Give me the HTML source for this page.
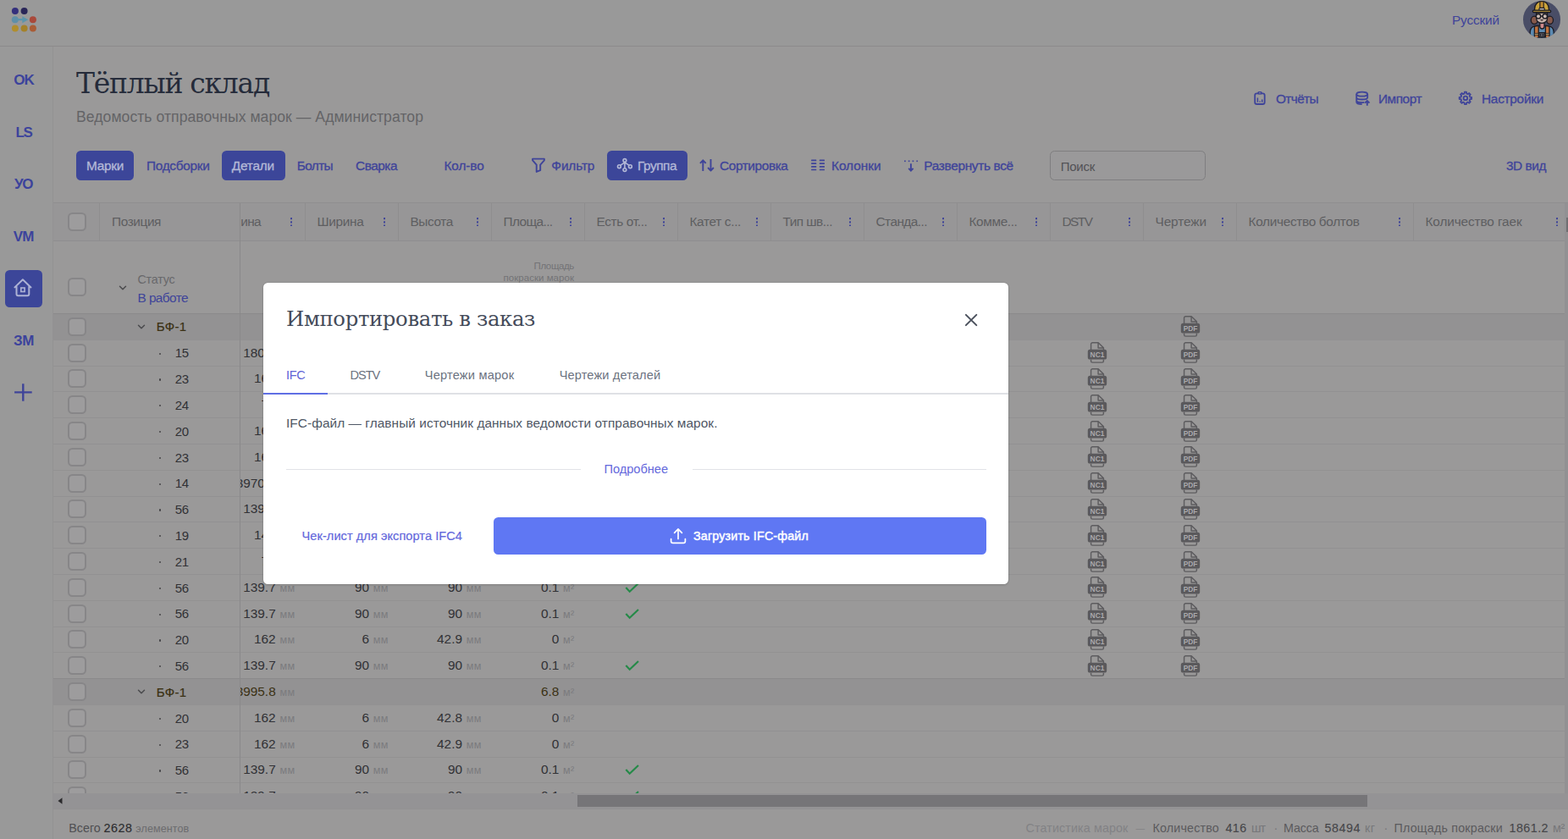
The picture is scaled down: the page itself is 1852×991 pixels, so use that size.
<!DOCTYPE html>
<html lang="ru"><head><meta charset="utf-8"><title>Тёплый склад — Ведомость отправочных марок</title>
<style>
*{box-sizing:border-box;margin:0;padding:0}
html,body{width:1852px;height:991px;overflow:hidden}
body{position:relative;background:#9a9999;font-family:'Liberation Sans',sans-serif;font-size:15.4px;color:#313135}
#app,#app div,#app span,#app svg,#app header,#app nav,#app main,#app footer,#app h1,#app h2,#app p,#app a,#app button,#app label,#app section{position:absolute;display:block}
#app{left:0;top:0;width:1852px;height:991px;overflow:hidden}
.t{white-space:pre}
a{text-decoration:none}
button{border:0;background:none;font:inherit}
h1,h2{font-weight:400}
.ln{background:#8c8a8b}
.cb{border:2px solid #878688;border-radius:5.5px;background:#9d9c9d}
</style></head>
<body><div id="app">
<header style="left:0;top:0;width:1852px;height:54px;background:#999999"><svg style="left:0px;top:0px;" width="54" height="48" viewBox="0 0 54 48"><circle cx="17.9" cy="12.9" r="4" fill="#342f7c"/><circle cx="28.6" cy="12.9" r="4" fill="#2a2658"/><circle cx="17.8" cy="23.2" r="4" fill="#5f8fa8"/><circle cx="38.9" cy="23.2" r="4" fill="#a9493b"/><circle cx="17.9" cy="33.5" r="4" fill="#b08e2e"/><circle cx="28.6" cy="33.5" r="4" fill="#a4822a"/><circle cx="38.9" cy="33.5" r="4" fill="#a95c36"/><path d="M21 22.1h5.3v-2.9l7 4-7 4v-2.900H21z" fill="#5c94ab"/></svg><a class="t" style="left:1715.00px;top:13.26px;font-size:15.4px;line-height:22px;color:#3f4499;letter-spacing:-0.158px;">Русский</a><div style="left:1799.2px;top:1.2px;width:43.6px;height:43.6px;border-radius:50%;overflow:hidden;background:#494d66"><svg style="left:-0.2px;top:-0.2px;" width="44" height="44" viewBox="0 0 44 44"><g stroke="#1b1b22" stroke-width="1.3" stroke-linejoin="round"><ellipse cx="13.2" cy="22.8" rx="3.9" ry="4.6" fill="#86594b"/><ellipse cx="31.6" cy="22.8" rx="3.9" ry="4.6" fill="#86594b"/><path d="M8.2 44.500v-7.500c0-4.600 3.400-7 7-7.600h14c3.600.6 7 3 7 7.600v7.500z" fill="#5c8bb2"/><path d="M19.8 26v4.3c0 1.600 1 2.700 2.600 2.700s2.600-1.100 2.600-2.700V26z" fill="#cf8a8c"/><path d="M13.4 30.2l4.800-.9V44h-4.800zM26.4 29.3l4.600.9V44h-4.600z" fill="#c1723d"/><path d="M13.4 38.4h4.800v1.900h-4.800zM26.4 38.4H31v1.900h-4.600z" fill="#d2b476" stroke-width="0.8"/><rect x="18.7" y="37.6" width="6.8" height="5.400" fill="#5a5d66"/><path d="M20.7 39v2.800M23.500 39v2.800" stroke-width="1" fill="none"/><path d="M15.6 14h13v6.500c0 3.600-2.900 6-6.500 6s-6.500-2.400-6.500-6z" fill="#c6b1a9"/><circle cx="18" cy="18.2" r="2.7" fill="#cbbbb4" stroke-width="1.4"/><circle cx="25.8" cy="18.2" r="2.7" fill="#cbbbb4" stroke-width="1.4"/><path d="M20.7 18.2h2.400" fill="none"/><path d="M20.6 22.4c.5 1.100 2.400 1.100 2.900 0z" fill="#7a3a34" stroke-width="0.7"/><path d="M13.6 11.600V9.400C13.600 4.200 17.200.4 22 .4s8.400 3.800 8.400 9v2.200z" fill="#caa33c"/><path d="M19.9.7h4.300v8h-4.300z" fill="#c28d2f" stroke-width="1.1"/><path d="M18.9 11.400V9.600c0-.7.5-1.200 1.200-1.200h4c.7 0 1.200.5 1.200 1.200v1.800z" fill="#c9c4c2" stroke-width="1.1"/><rect x="11.4" y="11.2" width="21.3" height="2.3" rx="1" fill="#caa33c"/></g></svg></div></header>
<div class="ln" style="left:0px;top:54px;width:1852px;height:1px;"></div><nav style="left:0;top:55px;width:62px;height:936px;background:#999999"></nav>
<div class="ln" style="left:62px;top:55px;width:1px;height:936px;background:#939293"></div><a class="t" style="left:16.30px;top:83.11px;font-size:17px;line-height:24px;color:#3c439c;font-weight:700;letter-spacing:-0.950px;">OK</a><a class="t" style="left:18.50px;top:145.11px;font-size:17px;line-height:24px;color:#3c439c;font-weight:700;letter-spacing:-1.467px;">LS</a><a class="t" style="left:17.00px;top:206.11px;font-size:17px;line-height:24px;color:#3c439c;font-weight:700;letter-spacing:-0.887px;">УО</a><a class="t" style="left:15.70px;top:268.31px;font-size:17px;line-height:24px;color:#3c439c;font-weight:700;letter-spacing:-0.700px;">VM</a><a class="t" style="left:16.00px;top:391.11px;font-size:17px;line-height:24px;color:#3c439c;font-weight:700;letter-spacing:-0.306px;">ЗМ</a><div style="left:6px;top:319px;width:44px;height:44px;background:#3c4699;border-radius:5.5px"><svg style="left:0px;top:0px;" width="44" height="44" viewBox="0 0 44 44"><path d="M11.4 20.4l9.500-9.100 9.600 9.100M13.500 19.500v8.800a1.900 1.900 0 0 0 1.900 1.900h11a1.900 1.900 0 0 0 1.900-1.900v-8.800" stroke="#adb2d5" stroke-width="2" fill="none" stroke-linecap="round" stroke-linejoin="round"/><rect x="18.8" y="21" width="4.3" height="4.500" stroke="#adb2d5" stroke-width="1.6" fill="none"/></svg></div><svg style="left:15px;top:451px" width="25" height="25" viewBox="15 451 25 25"><path d="M27.3 453.2v20.600M17.100 463.400h20.600" stroke="#3f4499" stroke-width="2.4" fill="none"/></svg>
<h1 class="t" style="left:90.00px;top:76.17px;font-size:33px;line-height:46px;color:#252b3a;font-family:'DejaVu Serif','Liberation Serif',serif;letter-spacing:-1.276px;">Тёплый склад</h1><p class="t" style="left:90.00px;top:125.60px;font-size:17.6px;line-height:25px;color:#646467;letter-spacing:0.052px;">Ведомость отправочных марок — Администратор</p><svg style="left:1478px;top:105px" width="20" height="22" viewBox="1478 105 20 22"><rect x="1482.2" y="110.3" width="11.5" height="12.700" rx="2.3" stroke="#3f4499" stroke-width="1.8" fill="none"/><rect x="1485.3" y="107.9" width="5.4" height="3.700" rx="1.5" fill="#3f4499"/><circle cx="1488" cy="109.7" r="0.8" fill="#9a9999"/><path d="M1485.4 120.700v-5.200M1488.100 120.700v-1.300M1490.700 120.700v-3.200" stroke="#3f4499" stroke-width="1.5" fill="none"/></svg><a class="t" style="left:1507.00px;top:106.16px;font-size:15.4px;line-height:22px;color:#3f4499;letter-spacing:-0.620px;-webkit-text-stroke:0.3px #3f4499;">Отчёты</a><svg style="left:1599px;top:106px" width="21" height="21" viewBox="1599 106 21 21"><ellipse cx="1608.7" cy="111.2" rx="6.5" ry="2.500" stroke="#3f4499" stroke-width="1.8" fill="none"/><path d="M1602.2 111.200v9.400c0 1.500 2.900 2.600 6.500 2.600M1615.200 111.200v4.500M1602.200 114.900c0 1.500 2.900 2.600 6.500 2.600s6.500-1.100 6.500-2.600M1602.200 118.600c0 1.500 2.900 2.600 6.500 2.600 1 0 1.800-.1 2.600-.2" stroke="#3f4499" stroke-width="1.8" fill="none"/><path d="M1614.8 124.700v-5.500M1612.100 121.700l2.700-2.700 2.700 2.700" stroke="#3f4499" stroke-width="1.9" fill="none"/></svg><a class="t" style="left:1628.00px;top:106.16px;font-size:15.4px;line-height:22px;color:#3f4499;letter-spacing:-0.469px;-webkit-text-stroke:0.3px #3f4499;">Импорт</a><svg style="left:1720px;top:105px" width="22" height="22" viewBox="1720 105 22 22"><path d="M1729.59 110.56L1729.81 108.68L1731.99 108.68L1732.21 110.56L1733.75 111.20L1735.23 110.02L1736.78 111.57L1735.60 113.05L1736.24 114.59L1738.12 114.81L1738.12 116.99L1736.24 117.21L1735.60 118.75L1736.78 120.23L1735.23 121.78L1733.75 120.60L1732.21 121.24L1731.99 123.12L1729.81 123.12L1729.59 121.24L1728.05 120.60L1726.57 121.78L1725.02 120.23L1726.20 118.75L1725.56 117.21L1723.68 116.99L1723.68 114.81L1725.56 114.59L1726.20 113.05L1725.02 111.57L1726.57 110.02L1728.05 111.20Z" stroke="#3f4499" stroke-width="1.8" fill="none" stroke-linejoin="round"/><circle cx="1730.9" cy="115.9" r="2.3" stroke="#3f4499" stroke-width="1.8" fill="none"/></svg><a class="t" style="left:1750.00px;top:106.16px;font-size:15.4px;line-height:22px;color:#3f4499;letter-spacing:-0.274px;-webkit-text-stroke:0.3px #3f4499;">Настройки</a>
<div style="left:90px;top:178px;width:67.5px;height:34.5px;background:#3c4699;border-radius:5.5px"></div><a class="t" style="left:102.00px;top:184.96px;font-size:15.4px;line-height:22px;color:#b4b9d7;letter-spacing:-0.251px;-webkit-text-stroke:0.3px #b4b9d7;">Марки</a><a class="t" style="left:173.00px;top:184.96px;font-size:15.4px;line-height:22px;color:#3f4499;letter-spacing:-0.304px;-webkit-text-stroke:0.3px #3f4499;">Подсборки</a><div style="left:262px;top:178px;width:74.5px;height:34.5px;background:#3c4699;border-radius:5.5px"></div><a class="t" style="left:273.80px;top:184.96px;font-size:15.4px;line-height:22px;color:#b4b9d7;letter-spacing:-0.217px;-webkit-text-stroke:0.3px #b4b9d7;">Детали</a><a class="t" style="left:350.80px;top:184.96px;font-size:15.4px;line-height:22px;color:#3f4499;letter-spacing:-0.644px;-webkit-text-stroke:0.3px #3f4499;">Болты</a><a class="t" style="left:420.00px;top:184.96px;font-size:15.4px;line-height:22px;color:#3f4499;letter-spacing:-0.479px;-webkit-text-stroke:0.3px #3f4499;">Сварка</a><a class="t" style="left:524.50px;top:184.96px;font-size:15.4px;line-height:22px;color:#3f4499;letter-spacing:-0.110px;-webkit-text-stroke:0.3px #3f4499;">Кол-во</a><svg style="left:626px;top:184px" width="20" height="22" viewBox="626 184 20 22"><path d="M629.05 187.65H642.85V189.300L638.200 194.700V201.200L633.700 202.900V194.700L629.050 189.300Z" stroke="#3f4499" stroke-width="1.9" fill="none" stroke-linejoin="round"/></svg><a class="t" style="left:651.30px;top:184.96px;font-size:15.4px;line-height:22px;color:#3f4499;letter-spacing:-0.117px;-webkit-text-stroke:0.3px #3f4499;">Фильтр</a><div style="left:716.8px;top:178px;width:95.4px;height:34.5px;background:#3c4699;border-radius:5.5px"></div><svg style="left:727px;top:184px" width="22" height="22" viewBox="727 184 22 22"><path d="M737.9 191.300V198.700M737.900 191.800L732.600 195.400M737.900 191.800L743.200 195.400" stroke="#b4b9d7" stroke-width="1.6" fill="none"/><circle cx="737.9" cy="189.5" r="1.9" stroke="#b4b9d7" stroke-width="1.6" fill="#3c4699"/><circle cx="731.4" cy="196.7" r="1.9" stroke="#b4b9d7" stroke-width="1.6" fill="#3c4699"/><circle cx="744.4" cy="196.7" r="1.9" stroke="#b4b9d7" stroke-width="1.6" fill="#3c4699"/><circle cx="737.9" cy="200.6" r="1.9" stroke="#b4b9d7" stroke-width="1.6" fill="#3c4699"/></svg><a class="t" style="left:753.00px;top:184.96px;font-size:15.4px;line-height:22px;color:#b4b9d7;letter-spacing:-0.464px;-webkit-text-stroke:0.3px #b4b9d7;">Группа</a><svg style="left:823px;top:184px" width="24" height="22" viewBox="823 184 24 22"><path d="M830.3 202V189.200M826.900 192.900L830.300 189.300L833.700 192.900M839.500 188.100V201.500M836.100 198L839.500 201.600L842.900 198" stroke="#3f4499" stroke-width="1.9" fill="none" stroke-linejoin="round"/></svg><a class="t" style="left:850.00px;top:184.96px;font-size:15.4px;line-height:22px;color:#3f4499;letter-spacing:-0.397px;-webkit-text-stroke:0.3px #3f4499;">Сортировка</a><svg style="left:955px;top:184px" width="22" height="22" viewBox="955 184 22 22"><rect x="958.1" y="188.45" width="6.2" height="1.7" rx="0.5" fill="#3f4499"/><rect x="958.1" y="192.20" width="6.2" height="1.7" rx="0.5" fill="#3f4499"/><rect x="958.1" y="195.95" width="6.2" height="1.7" rx="0.5" fill="#3f4499"/><rect x="958.1" y="199.65" width="6.2" height="1.7" rx="0.5" fill="#3f4499"/><rect x="967.8" y="188.45" width="6.2" height="1.7" rx="0.5" fill="#3f4499"/><rect x="967.8" y="192.20" width="6.2" height="1.7" rx="0.5" fill="#3f4499"/><rect x="967.8" y="195.95" width="6.2" height="1.7" rx="0.5" fill="#3f4499"/><rect x="967.8" y="199.65" width="6.2" height="1.7" rx="0.5" fill="#3f4499"/></svg><a class="t" style="left:982.00px;top:184.96px;font-size:15.4px;line-height:22px;color:#3f4499;letter-spacing:-0.033px;-webkit-text-stroke:0.3px #3f4499;">Колонки</a><svg style="left:1066px;top:184px" width="20" height="22" viewBox="1066 184 20 22"><rect x="1068.05" y="189.5" width="1.7" height="1.600" fill="#3f4499"/><rect x="1072.80" y="189.5" width="1.7" height="1.600" fill="#3f4499"/><rect x="1077.55" y="189.5" width="1.7" height="1.600" fill="#3f4499"/><rect x="1082.35" y="189.5" width="1.7" height="1.600" fill="#3f4499"/><path d="M1075.9 193.200V201.300M1073.200 198.800L1075.900 201.600L1078.600 198.800" stroke="#3f4499" stroke-width="1.9" fill="none"/></svg><a class="t" style="left:1091.30px;top:184.96px;font-size:15.4px;line-height:22px;color:#3f4499;letter-spacing:-0.330px;-webkit-text-stroke:0.3px #3f4499;">Развернуть всё</a><div style="left:1240px;top:178px;width:184px;height:34.5px;border:1px solid #7f7e80;border-radius:5.5px;background:#9a999a"></div><label class="t" style="left:1252.80px;top:185.60px;font-size:15px;line-height:21px;color:#525256;letter-spacing:-0.276px;">Поиск</label><a class="t" style="left:1779.00px;top:184.96px;font-size:15.4px;line-height:22px;color:#3f4499;letter-spacing:-0.453px;-webkit-text-stroke:0.3px #3f4499;">3D вид</a>
<section style="left:0;top:0;width:1852px;height:991px"><div class="ln" style="left:63px;top:239px;width:1789px;height:1px;background:#8f8e8f"></div><div style="left:63px;top:240px;width:1785px;height:44.5px;background:#979697"></div><div class="ln" style="left:63px;top:284px;width:1789px;height:1px;background:#8f8e8f"></div><div style="left:63px;top:285px;width:1785px;height:653px;overflow:hidden"><div class="cb" style="left:17px;top:43px;width:22px;height:22px;"></div><svg style="left:77px;top:51.5px;" width="10" height="6.5" viewBox="-5 -3.2 10 6.5"><path d="M-3.500 -1.900L0 1.600L3.500 -1.900" stroke="#4a4a4d" stroke-width="1.500" fill="none" stroke-linecap="round" stroke-linejoin="round"/></svg><span class="t" style="left:99.50px;top:34.95px;font-size:14.3px;line-height:20px;color:#68686b;letter-spacing:-0.201px;">Статус</span><span class="t" style="left:99.50px;top:55.66px;font-size:15.4px;line-height:22px;color:#3f4499;letter-spacing:-0.580px;">В работе</span><span class="t" style="left:567.50px;top:21.02px;font-size:11.5px;line-height:16px;color:#737376;letter-spacing:-0.366px;">Площадь</span><span class="t" style="left:531.50px;top:34.82px;font-size:11.5px;line-height:16px;color:#737376;letter-spacing:0.037px;">покраски марок</span><div style="left:0px;top:85.3px;width:1789px;height:30.8px;background:#939293"></div><div style="left:0px;top:85px;width:1789px;height:1px;background:#8b8a8b"></div><div class="cb" style="left:17px;top:89.7px;width:22px;height:22px;"></div><svg style="left:98.8px;top:97.7px;" width="10" height="6.5" viewBox="-5 -3.2 10 6.5"><path d="M-3.500 -1.900L0 1.600L3.500 -1.900" stroke="#4a4a4d" stroke-width="1.500" fill="none" stroke-linecap="round" stroke-linejoin="round"/></svg><span class="t" style="left:121.80px;top:90.30px;font-size:15px;line-height:21px;color:#3b3113;letter-spacing:0.295px;-webkit-text-stroke:0.2px #3b3113;">БФ-1</span><svg style="left:1331px;top:88.4px;" width="24" height="25.5" viewBox="0 0 24 25.500"><path d="M4.600 9V2.600a1.800 1.800 0 0 1 1.800-1.800h6.800l6.200 6V9M4.600 20.500v1.900a1.700 1.700 0 0 0 1.700 1.700h11.400a1.700 1.700 0 0 0 1.700-1.700v-1.900M13.100 1v5.900h6" stroke="#5d5c5f" stroke-width="1.450" fill="none" stroke-linejoin="round"/><rect x="0.800" y="8.800" width="22.400" height="11.800" rx="2.600" fill="#5a595c"/><text x="12" y="18.200" text-anchor="middle" font-family="'Liberation Sans',sans-serif" font-weight="700" font-size="8.400" fill="#aaa9ac">PDF</text></svg><div style="left:0px;top:115.8px;width:1789px;height:1px;background:#929192"></div><div class="cb" style="left:17px;top:120.5px;width:22px;height:22px;"></div><div style="left:124.5px;top:131.5px;width:2.4px;height:2.4px;background:#444447;border-radius:50%"></div><span class="t" style="left:143.70px;top:121.30px;font-size:15px;line-height:21px;color:#313135;letter-spacing:-0.194px;">15</span><svg style="left:1221px;top:119.2px;" width="24" height="25.5" viewBox="0 0 24 25.500"><path d="M4.600 9V2.600a1.800 1.800 0 0 1 1.800-1.800h6.800l6.200 6V9M4.600 20.500v1.900a1.700 1.700 0 0 0 1.700 1.700h11.400a1.700 1.700 0 0 0 1.700-1.700v-1.900M13.100 1v5.900h6" stroke="#5d5c5f" stroke-width="1.450" fill="none" stroke-linejoin="round"/><rect x="0.800" y="8.800" width="22.400" height="11.800" rx="2.600" fill="#5a595c"/><text x="12" y="18.200" text-anchor="middle" font-family="'Liberation Sans',sans-serif" font-weight="700" font-size="8.400" fill="#aaa9ac">NC1</text></svg><svg style="left:1331px;top:119.2px;" width="24" height="25.5" viewBox="0 0 24 25.500"><path d="M4.600 9V2.600a1.800 1.800 0 0 1 1.800-1.800h6.800l6.200 6V9M4.600 20.500v1.900a1.700 1.700 0 0 0 1.700 1.700h11.400a1.700 1.700 0 0 0 1.700-1.700v-1.900M13.100 1v5.900h6" stroke="#5d5c5f" stroke-width="1.450" fill="none" stroke-linejoin="round"/><rect x="0.800" y="8.800" width="22.400" height="11.800" rx="2.600" fill="#5a595c"/><text x="12" y="18.200" text-anchor="middle" font-family="'Liberation Sans',sans-serif" font-weight="700" font-size="8.400" fill="#aaa9ac">PDF</text></svg><div style="left:0px;top:146.6px;width:1789px;height:1px;background:#929192"></div><div class="cb" style="left:17px;top:151.3px;width:22px;height:22px;"></div><div style="left:124.5px;top:162.3px;width:2.4px;height:2.4px;background:#444447;border-radius:50%"></div><span class="t" style="left:143.70px;top:152.10px;font-size:15px;line-height:21px;color:#313135;letter-spacing:-0.194px;">23</span><svg style="left:1221px;top:150px;" width="24" height="25.5" viewBox="0 0 24 25.500"><path d="M4.600 9V2.600a1.800 1.800 0 0 1 1.800-1.800h6.800l6.200 6V9M4.600 20.500v1.900a1.700 1.700 0 0 0 1.700 1.700h11.400a1.700 1.700 0 0 0 1.700-1.700v-1.900M13.100 1v5.900h6" stroke="#5d5c5f" stroke-width="1.450" fill="none" stroke-linejoin="round"/><rect x="0.800" y="8.800" width="22.400" height="11.800" rx="2.600" fill="#5a595c"/><text x="12" y="18.200" text-anchor="middle" font-family="'Liberation Sans',sans-serif" font-weight="700" font-size="8.400" fill="#aaa9ac">NC1</text></svg><svg style="left:1331px;top:150px;" width="24" height="25.5" viewBox="0 0 24 25.500"><path d="M4.600 9V2.600a1.800 1.800 0 0 1 1.800-1.800h6.800l6.200 6V9M4.600 20.500v1.900a1.700 1.700 0 0 0 1.700 1.700h11.400a1.700 1.700 0 0 0 1.700-1.700v-1.900M13.100 1v5.900h6" stroke="#5d5c5f" stroke-width="1.450" fill="none" stroke-linejoin="round"/><rect x="0.800" y="8.800" width="22.400" height="11.800" rx="2.600" fill="#5a595c"/><text x="12" y="18.200" text-anchor="middle" font-family="'Liberation Sans',sans-serif" font-weight="700" font-size="8.400" fill="#aaa9ac">PDF</text></svg><div style="left:0px;top:177.4px;width:1789px;height:1px;background:#929192"></div><div class="cb" style="left:17px;top:182.1px;width:22px;height:22px;"></div><div style="left:124.5px;top:193.1px;width:2.4px;height:2.4px;background:#444447;border-radius:50%"></div><span class="t" style="left:143.70px;top:182.90px;font-size:15px;line-height:21px;color:#313135;letter-spacing:-0.194px;">24</span><svg style="left:1221px;top:180.8px;" width="24" height="25.5" viewBox="0 0 24 25.500"><path d="M4.600 9V2.600a1.800 1.800 0 0 1 1.800-1.800h6.800l6.200 6V9M4.600 20.500v1.900a1.700 1.700 0 0 0 1.700 1.700h11.400a1.700 1.700 0 0 0 1.700-1.700v-1.900M13.100 1v5.900h6" stroke="#5d5c5f" stroke-width="1.450" fill="none" stroke-linejoin="round"/><rect x="0.800" y="8.800" width="22.400" height="11.800" rx="2.600" fill="#5a595c"/><text x="12" y="18.200" text-anchor="middle" font-family="'Liberation Sans',sans-serif" font-weight="700" font-size="8.400" fill="#aaa9ac">NC1</text></svg><svg style="left:1331px;top:180.8px;" width="24" height="25.5" viewBox="0 0 24 25.500"><path d="M4.600 9V2.600a1.800 1.800 0 0 1 1.800-1.800h6.800l6.200 6V9M4.600 20.500v1.900a1.700 1.700 0 0 0 1.700 1.700h11.400a1.700 1.700 0 0 0 1.700-1.700v-1.900M13.100 1v5.900h6" stroke="#5d5c5f" stroke-width="1.450" fill="none" stroke-linejoin="round"/><rect x="0.800" y="8.800" width="22.400" height="11.800" rx="2.600" fill="#5a595c"/><text x="12" y="18.200" text-anchor="middle" font-family="'Liberation Sans',sans-serif" font-weight="700" font-size="8.400" fill="#aaa9ac">PDF</text></svg><div style="left:0px;top:208.2px;width:1789px;height:1px;background:#929192"></div><div class="cb" style="left:17px;top:212.9px;width:22px;height:22px;"></div><div style="left:124.5px;top:223.9px;width:2.4px;height:2.4px;background:#444447;border-radius:50%"></div><span class="t" style="left:143.70px;top:213.70px;font-size:15px;line-height:21px;color:#313135;letter-spacing:-0.194px;">20</span><svg style="left:1221px;top:211.6px;" width="24" height="25.5" viewBox="0 0 24 25.500"><path d="M4.600 9V2.600a1.800 1.800 0 0 1 1.800-1.800h6.800l6.200 6V9M4.600 20.500v1.900a1.700 1.700 0 0 0 1.700 1.700h11.400a1.700 1.700 0 0 0 1.700-1.700v-1.900M13.100 1v5.900h6" stroke="#5d5c5f" stroke-width="1.450" fill="none" stroke-linejoin="round"/><rect x="0.800" y="8.800" width="22.400" height="11.800" rx="2.600" fill="#5a595c"/><text x="12" y="18.200" text-anchor="middle" font-family="'Liberation Sans',sans-serif" font-weight="700" font-size="8.400" fill="#aaa9ac">NC1</text></svg><svg style="left:1331px;top:211.6px;" width="24" height="25.5" viewBox="0 0 24 25.500"><path d="M4.600 9V2.600a1.800 1.800 0 0 1 1.800-1.800h6.800l6.200 6V9M4.600 20.500v1.900a1.700 1.700 0 0 0 1.700 1.700h11.400a1.700 1.700 0 0 0 1.700-1.700v-1.900M13.100 1v5.900h6" stroke="#5d5c5f" stroke-width="1.450" fill="none" stroke-linejoin="round"/><rect x="0.800" y="8.800" width="22.400" height="11.800" rx="2.600" fill="#5a595c"/><text x="12" y="18.200" text-anchor="middle" font-family="'Liberation Sans',sans-serif" font-weight="700" font-size="8.400" fill="#aaa9ac">PDF</text></svg><div style="left:0px;top:239px;width:1789px;height:1px;background:#929192"></div><div class="cb" style="left:17px;top:243.7px;width:22px;height:22px;"></div><div style="left:124.5px;top:254.7px;width:2.4px;height:2.4px;background:#444447;border-radius:50%"></div><span class="t" style="left:143.70px;top:244.50px;font-size:15px;line-height:21px;color:#313135;letter-spacing:-0.194px;">23</span><svg style="left:1221px;top:242.4px;" width="24" height="25.5" viewBox="0 0 24 25.500"><path d="M4.600 9V2.600a1.800 1.800 0 0 1 1.800-1.800h6.800l6.200 6V9M4.600 20.500v1.900a1.700 1.700 0 0 0 1.700 1.700h11.400a1.700 1.700 0 0 0 1.700-1.700v-1.900M13.100 1v5.900h6" stroke="#5d5c5f" stroke-width="1.450" fill="none" stroke-linejoin="round"/><rect x="0.800" y="8.800" width="22.400" height="11.800" rx="2.600" fill="#5a595c"/><text x="12" y="18.200" text-anchor="middle" font-family="'Liberation Sans',sans-serif" font-weight="700" font-size="8.400" fill="#aaa9ac">NC1</text></svg><svg style="left:1331px;top:242.4px;" width="24" height="25.5" viewBox="0 0 24 25.500"><path d="M4.600 9V2.600a1.800 1.800 0 0 1 1.800-1.800h6.800l6.200 6V9M4.600 20.500v1.900a1.700 1.700 0 0 0 1.700 1.700h11.400a1.700 1.700 0 0 0 1.700-1.700v-1.900M13.100 1v5.900h6" stroke="#5d5c5f" stroke-width="1.450" fill="none" stroke-linejoin="round"/><rect x="0.800" y="8.800" width="22.400" height="11.800" rx="2.600" fill="#5a595c"/><text x="12" y="18.200" text-anchor="middle" font-family="'Liberation Sans',sans-serif" font-weight="700" font-size="8.400" fill="#aaa9ac">PDF</text></svg><div style="left:0px;top:269.8px;width:1789px;height:1px;background:#929192"></div><div class="cb" style="left:17px;top:274.5px;width:22px;height:22px;"></div><div style="left:124.5px;top:285.5px;width:2.4px;height:2.4px;background:#444447;border-radius:50%"></div><span class="t" style="left:143.70px;top:275.30px;font-size:15px;line-height:21px;color:#313135;letter-spacing:-0.194px;">14</span><svg style="left:1221px;top:273.2px;" width="24" height="25.5" viewBox="0 0 24 25.500"><path d="M4.600 9V2.600a1.800 1.800 0 0 1 1.800-1.800h6.800l6.200 6V9M4.600 20.500v1.900a1.700 1.700 0 0 0 1.700 1.700h11.400a1.700 1.700 0 0 0 1.700-1.700v-1.900M13.100 1v5.900h6" stroke="#5d5c5f" stroke-width="1.450" fill="none" stroke-linejoin="round"/><rect x="0.800" y="8.800" width="22.400" height="11.800" rx="2.600" fill="#5a595c"/><text x="12" y="18.200" text-anchor="middle" font-family="'Liberation Sans',sans-serif" font-weight="700" font-size="8.400" fill="#aaa9ac">NC1</text></svg><svg style="left:1331px;top:273.2px;" width="24" height="25.5" viewBox="0 0 24 25.500"><path d="M4.600 9V2.600a1.800 1.800 0 0 1 1.800-1.800h6.800l6.200 6V9M4.600 20.500v1.900a1.700 1.700 0 0 0 1.700 1.700h11.400a1.700 1.700 0 0 0 1.700-1.700v-1.900M13.100 1v5.900h6" stroke="#5d5c5f" stroke-width="1.450" fill="none" stroke-linejoin="round"/><rect x="0.800" y="8.800" width="22.400" height="11.800" rx="2.600" fill="#5a595c"/><text x="12" y="18.200" text-anchor="middle" font-family="'Liberation Sans',sans-serif" font-weight="700" font-size="8.400" fill="#aaa9ac">PDF</text></svg><div style="left:0px;top:300.6px;width:1789px;height:1px;background:#929192"></div><div class="cb" style="left:17px;top:305.3px;width:22px;height:22px;"></div><div style="left:124.5px;top:316.3px;width:2.4px;height:2.4px;background:#444447;border-radius:50%"></div><span class="t" style="left:143.70px;top:306.10px;font-size:15px;line-height:21px;color:#313135;letter-spacing:-0.194px;">56</span><svg style="left:673px;top:308.3px;" width="20" height="16" viewBox="-9 -8 20 16"><path d="M-5.700 0.100L-1.300 4.700L9 -5" stroke="#258a48" stroke-width="2.200" fill="none" stroke-linejoin="miter"/></svg><svg style="left:1221px;top:304px;" width="24" height="25.5" viewBox="0 0 24 25.500"><path d="M4.600 9V2.600a1.800 1.800 0 0 1 1.800-1.800h6.800l6.200 6V9M4.600 20.500v1.900a1.700 1.700 0 0 0 1.700 1.700h11.400a1.700 1.700 0 0 0 1.700-1.700v-1.900M13.100 1v5.900h6" stroke="#5d5c5f" stroke-width="1.450" fill="none" stroke-linejoin="round"/><rect x="0.800" y="8.800" width="22.400" height="11.800" rx="2.600" fill="#5a595c"/><text x="12" y="18.200" text-anchor="middle" font-family="'Liberation Sans',sans-serif" font-weight="700" font-size="8.400" fill="#aaa9ac">NC1</text></svg><svg style="left:1331px;top:304px;" width="24" height="25.5" viewBox="0 0 24 25.500"><path d="M4.600 9V2.600a1.800 1.800 0 0 1 1.800-1.800h6.800l6.200 6V9M4.600 20.500v1.900a1.700 1.700 0 0 0 1.700 1.700h11.400a1.700 1.700 0 0 0 1.700-1.700v-1.900M13.100 1v5.900h6" stroke="#5d5c5f" stroke-width="1.450" fill="none" stroke-linejoin="round"/><rect x="0.800" y="8.800" width="22.400" height="11.800" rx="2.600" fill="#5a595c"/><text x="12" y="18.200" text-anchor="middle" font-family="'Liberation Sans',sans-serif" font-weight="700" font-size="8.400" fill="#aaa9ac">PDF</text></svg><div style="left:0px;top:331.4px;width:1789px;height:1px;background:#929192"></div><div class="cb" style="left:17px;top:336.1px;width:22px;height:22px;"></div><div style="left:124.5px;top:347.1px;width:2.4px;height:2.4px;background:#444447;border-radius:50%"></div><span class="t" style="left:143.70px;top:336.90px;font-size:15px;line-height:21px;color:#313135;letter-spacing:-0.194px;">19</span><svg style="left:1221px;top:334.8px;" width="24" height="25.5" viewBox="0 0 24 25.500"><path d="M4.600 9V2.600a1.800 1.800 0 0 1 1.800-1.800h6.800l6.200 6V9M4.600 20.500v1.900a1.700 1.700 0 0 0 1.700 1.700h11.400a1.700 1.700 0 0 0 1.700-1.700v-1.900M13.100 1v5.900h6" stroke="#5d5c5f" stroke-width="1.450" fill="none" stroke-linejoin="round"/><rect x="0.800" y="8.800" width="22.400" height="11.800" rx="2.600" fill="#5a595c"/><text x="12" y="18.200" text-anchor="middle" font-family="'Liberation Sans',sans-serif" font-weight="700" font-size="8.400" fill="#aaa9ac">NC1</text></svg><svg style="left:1331px;top:334.8px;" width="24" height="25.5" viewBox="0 0 24 25.500"><path d="M4.600 9V2.600a1.800 1.800 0 0 1 1.800-1.800h6.800l6.200 6V9M4.600 20.500v1.900a1.700 1.700 0 0 0 1.700 1.700h11.400a1.700 1.700 0 0 0 1.700-1.700v-1.900M13.100 1v5.900h6" stroke="#5d5c5f" stroke-width="1.450" fill="none" stroke-linejoin="round"/><rect x="0.800" y="8.800" width="22.400" height="11.800" rx="2.600" fill="#5a595c"/><text x="12" y="18.200" text-anchor="middle" font-family="'Liberation Sans',sans-serif" font-weight="700" font-size="8.400" fill="#aaa9ac">PDF</text></svg><div style="left:0px;top:362.2px;width:1789px;height:1px;background:#929192"></div><div class="cb" style="left:17px;top:366.9px;width:22px;height:22px;"></div><div style="left:124.5px;top:377.9px;width:2.4px;height:2.4px;background:#444447;border-radius:50%"></div><span class="t" style="left:143.70px;top:367.70px;font-size:15px;line-height:21px;color:#313135;letter-spacing:-0.194px;">21</span><svg style="left:1221px;top:365.6px;" width="24" height="25.5" viewBox="0 0 24 25.500"><path d="M4.600 9V2.600a1.800 1.800 0 0 1 1.800-1.800h6.800l6.200 6V9M4.600 20.500v1.900a1.700 1.700 0 0 0 1.700 1.700h11.400a1.700 1.700 0 0 0 1.700-1.700v-1.900M13.100 1v5.900h6" stroke="#5d5c5f" stroke-width="1.450" fill="none" stroke-linejoin="round"/><rect x="0.800" y="8.800" width="22.400" height="11.800" rx="2.600" fill="#5a595c"/><text x="12" y="18.200" text-anchor="middle" font-family="'Liberation Sans',sans-serif" font-weight="700" font-size="8.400" fill="#aaa9ac">NC1</text></svg><svg style="left:1331px;top:365.6px;" width="24" height="25.5" viewBox="0 0 24 25.500"><path d="M4.600 9V2.600a1.800 1.800 0 0 1 1.800-1.800h6.800l6.200 6V9M4.600 20.500v1.900a1.700 1.700 0 0 0 1.700 1.700h11.400a1.700 1.700 0 0 0 1.700-1.700v-1.900M13.100 1v5.900h6" stroke="#5d5c5f" stroke-width="1.450" fill="none" stroke-linejoin="round"/><rect x="0.800" y="8.800" width="22.400" height="11.800" rx="2.600" fill="#5a595c"/><text x="12" y="18.200" text-anchor="middle" font-family="'Liberation Sans',sans-serif" font-weight="700" font-size="8.400" fill="#aaa9ac">PDF</text></svg><div style="left:0px;top:393px;width:1789px;height:1px;background:#929192"></div><div class="cb" style="left:17px;top:397.7px;width:22px;height:22px;"></div><div style="left:124.5px;top:408.7px;width:2.4px;height:2.4px;background:#444447;border-radius:50%"></div><span class="t" style="left:143.70px;top:398.50px;font-size:15px;line-height:21px;color:#313135;letter-spacing:-0.194px;">56</span><svg style="left:673px;top:400.7px;" width="20" height="16" viewBox="-9 -8 20 16"><path d="M-5.700 0.100L-1.300 4.700L9 -5" stroke="#258a48" stroke-width="2.200" fill="none" stroke-linejoin="miter"/></svg><svg style="left:1221px;top:396.4px;" width="24" height="25.5" viewBox="0 0 24 25.500"><path d="M4.600 9V2.600a1.800 1.800 0 0 1 1.800-1.800h6.800l6.200 6V9M4.600 20.500v1.900a1.700 1.700 0 0 0 1.700 1.700h11.400a1.700 1.700 0 0 0 1.700-1.700v-1.900M13.100 1v5.900h6" stroke="#5d5c5f" stroke-width="1.450" fill="none" stroke-linejoin="round"/><rect x="0.800" y="8.800" width="22.400" height="11.800" rx="2.600" fill="#5a595c"/><text x="12" y="18.200" text-anchor="middle" font-family="'Liberation Sans',sans-serif" font-weight="700" font-size="8.400" fill="#aaa9ac">NC1</text></svg><svg style="left:1331px;top:396.4px;" width="24" height="25.5" viewBox="0 0 24 25.500"><path d="M4.600 9V2.600a1.800 1.800 0 0 1 1.800-1.800h6.800l6.200 6V9M4.600 20.500v1.900a1.700 1.700 0 0 0 1.700 1.700h11.400a1.700 1.700 0 0 0 1.700-1.700v-1.900M13.100 1v5.900h6" stroke="#5d5c5f" stroke-width="1.450" fill="none" stroke-linejoin="round"/><rect x="0.800" y="8.800" width="22.400" height="11.800" rx="2.600" fill="#5a595c"/><text x="12" y="18.200" text-anchor="middle" font-family="'Liberation Sans',sans-serif" font-weight="700" font-size="8.400" fill="#aaa9ac">PDF</text></svg><div style="left:0px;top:423.8px;width:1789px;height:1px;background:#929192"></div><div class="cb" style="left:17px;top:428.5px;width:22px;height:22px;"></div><div style="left:124.5px;top:439.5px;width:2.4px;height:2.4px;background:#444447;border-radius:50%"></div><span class="t" style="left:143.70px;top:429.30px;font-size:15px;line-height:21px;color:#313135;letter-spacing:-0.194px;">56</span><svg style="left:673px;top:431.5px;" width="20" height="16" viewBox="-9 -8 20 16"><path d="M-5.700 0.100L-1.300 4.700L9 -5" stroke="#258a48" stroke-width="2.200" fill="none" stroke-linejoin="miter"/></svg><svg style="left:1221px;top:427.2px;" width="24" height="25.5" viewBox="0 0 24 25.500"><path d="M4.600 9V2.600a1.800 1.800 0 0 1 1.800-1.800h6.800l6.200 6V9M4.600 20.500v1.900a1.700 1.700 0 0 0 1.700 1.700h11.400a1.700 1.700 0 0 0 1.700-1.700v-1.900M13.100 1v5.900h6" stroke="#5d5c5f" stroke-width="1.450" fill="none" stroke-linejoin="round"/><rect x="0.800" y="8.800" width="22.400" height="11.800" rx="2.600" fill="#5a595c"/><text x="12" y="18.200" text-anchor="middle" font-family="'Liberation Sans',sans-serif" font-weight="700" font-size="8.400" fill="#aaa9ac">NC1</text></svg><svg style="left:1331px;top:427.2px;" width="24" height="25.5" viewBox="0 0 24 25.500"><path d="M4.600 9V2.600a1.800 1.800 0 0 1 1.800-1.800h6.800l6.200 6V9M4.600 20.500v1.900a1.700 1.700 0 0 0 1.700 1.700h11.400a1.700 1.700 0 0 0 1.700-1.700v-1.900M13.100 1v5.900h6" stroke="#5d5c5f" stroke-width="1.450" fill="none" stroke-linejoin="round"/><rect x="0.800" y="8.800" width="22.400" height="11.800" rx="2.600" fill="#5a595c"/><text x="12" y="18.200" text-anchor="middle" font-family="'Liberation Sans',sans-serif" font-weight="700" font-size="8.400" fill="#aaa9ac">PDF</text></svg><div style="left:0px;top:454.6px;width:1789px;height:1px;background:#929192"></div><div class="cb" style="left:17px;top:459.3px;width:22px;height:22px;"></div><div style="left:124.5px;top:470.3px;width:2.4px;height:2.4px;background:#444447;border-radius:50%"></div><span class="t" style="left:143.70px;top:460.10px;font-size:15px;line-height:21px;color:#313135;letter-spacing:-0.194px;">20</span><svg style="left:1221px;top:458px;" width="24" height="25.5" viewBox="0 0 24 25.500"><path d="M4.600 9V2.600a1.800 1.800 0 0 1 1.800-1.800h6.800l6.200 6V9M4.600 20.500v1.900a1.700 1.700 0 0 0 1.700 1.700h11.400a1.700 1.700 0 0 0 1.700-1.700v-1.900M13.100 1v5.900h6" stroke="#5d5c5f" stroke-width="1.450" fill="none" stroke-linejoin="round"/><rect x="0.800" y="8.800" width="22.400" height="11.800" rx="2.600" fill="#5a595c"/><text x="12" y="18.200" text-anchor="middle" font-family="'Liberation Sans',sans-serif" font-weight="700" font-size="8.400" fill="#aaa9ac">NC1</text></svg><svg style="left:1331px;top:458px;" width="24" height="25.5" viewBox="0 0 24 25.500"><path d="M4.600 9V2.600a1.800 1.800 0 0 1 1.800-1.800h6.800l6.200 6V9M4.600 20.500v1.900a1.700 1.700 0 0 0 1.700 1.700h11.400a1.700 1.700 0 0 0 1.700-1.700v-1.900M13.100 1v5.900h6" stroke="#5d5c5f" stroke-width="1.450" fill="none" stroke-linejoin="round"/><rect x="0.800" y="8.800" width="22.400" height="11.800" rx="2.600" fill="#5a595c"/><text x="12" y="18.200" text-anchor="middle" font-family="'Liberation Sans',sans-serif" font-weight="700" font-size="8.400" fill="#aaa9ac">PDF</text></svg><div style="left:0px;top:485.4px;width:1789px;height:1px;background:#929192"></div><div class="cb" style="left:17px;top:490.1px;width:22px;height:22px;"></div><div style="left:124.5px;top:501.1px;width:2.4px;height:2.4px;background:#444447;border-radius:50%"></div><span class="t" style="left:143.70px;top:490.90px;font-size:15px;line-height:21px;color:#313135;letter-spacing:-0.194px;">56</span><svg style="left:673px;top:493.1px;" width="20" height="16" viewBox="-9 -8 20 16"><path d="M-5.700 0.100L-1.300 4.700L9 -5" stroke="#258a48" stroke-width="2.200" fill="none" stroke-linejoin="miter"/></svg><svg style="left:1221px;top:488.8px;" width="24" height="25.5" viewBox="0 0 24 25.500"><path d="M4.600 9V2.600a1.800 1.800 0 0 1 1.800-1.800h6.800l6.200 6V9M4.600 20.500v1.900a1.700 1.700 0 0 0 1.700 1.700h11.400a1.700 1.700 0 0 0 1.700-1.700v-1.900M13.100 1v5.900h6" stroke="#5d5c5f" stroke-width="1.450" fill="none" stroke-linejoin="round"/><rect x="0.800" y="8.800" width="22.400" height="11.800" rx="2.600" fill="#5a595c"/><text x="12" y="18.200" text-anchor="middle" font-family="'Liberation Sans',sans-serif" font-weight="700" font-size="8.400" fill="#aaa9ac">NC1</text></svg><svg style="left:1331px;top:488.8px;" width="24" height="25.5" viewBox="0 0 24 25.500"><path d="M4.600 9V2.600a1.800 1.800 0 0 1 1.800-1.800h6.800l6.200 6V9M4.600 20.500v1.900a1.700 1.700 0 0 0 1.700 1.700h11.400a1.700 1.700 0 0 0 1.700-1.700v-1.900M13.100 1v5.900h6" stroke="#5d5c5f" stroke-width="1.450" fill="none" stroke-linejoin="round"/><rect x="0.800" y="8.800" width="22.400" height="11.800" rx="2.600" fill="#5a595c"/><text x="12" y="18.200" text-anchor="middle" font-family="'Liberation Sans',sans-serif" font-weight="700" font-size="8.400" fill="#aaa9ac">PDF</text></svg><div style="left:0px;top:516.5px;width:1789px;height:30.8px;background:#939293"></div><div style="left:0px;top:516.2px;width:1789px;height:1px;background:#8b8a8b"></div><div class="cb" style="left:17px;top:520.9px;width:22px;height:22px;"></div><svg style="left:98.8px;top:528.9px;" width="10" height="6.5" viewBox="-5 -3.2 10 6.5"><path d="M-3.500 -1.900L0 1.600L3.500 -1.900" stroke="#4a4a4d" stroke-width="1.500" fill="none" stroke-linecap="round" stroke-linejoin="round"/></svg><span class="t" style="left:121.80px;top:521.50px;font-size:15px;line-height:21px;color:#3b3113;letter-spacing:0.295px;-webkit-text-stroke:0.2px #3b3113;">БФ-1</span><div style="left:0px;top:547px;width:1789px;height:1px;background:#929192"></div><div class="cb" style="left:17px;top:551.7px;width:22px;height:22px;"></div><div style="left:124.5px;top:562.7px;width:2.4px;height:2.4px;background:#444447;border-radius:50%"></div><span class="t" style="left:143.70px;top:552.50px;font-size:15px;line-height:21px;color:#313135;letter-spacing:-0.194px;">20</span><div style="left:0px;top:577.8px;width:1789px;height:1px;background:#929192"></div><div class="cb" style="left:17px;top:582.5px;width:22px;height:22px;"></div><div style="left:124.5px;top:593.5px;width:2.4px;height:2.4px;background:#444447;border-radius:50%"></div><span class="t" style="left:143.70px;top:583.30px;font-size:15px;line-height:21px;color:#313135;letter-spacing:-0.194px;">23</span><div style="left:0px;top:608.6px;width:1789px;height:1px;background:#929192"></div><div class="cb" style="left:17px;top:613.3px;width:22px;height:22px;"></div><div style="left:124.5px;top:624.3px;width:2.4px;height:2.4px;background:#444447;border-radius:50%"></div><span class="t" style="left:143.70px;top:614.10px;font-size:15px;line-height:21px;color:#313135;letter-spacing:-0.194px;">56</span><svg style="left:673px;top:616.3px;" width="20" height="16" viewBox="-9 -8 20 16"><path d="M-5.700 0.100L-1.300 4.700L9 -5" stroke="#258a48" stroke-width="2.200" fill="none" stroke-linejoin="miter"/></svg><div style="left:0px;top:639.4px;width:1789px;height:1px;background:#929192"></div><div class="cb" style="left:17px;top:644.1px;width:22px;height:22px;"></div><div style="left:124.5px;top:655.1px;width:2.4px;height:2.4px;background:#444447;border-radius:50%"></div><span class="t" style="left:143.70px;top:644.90px;font-size:15px;line-height:21px;color:#313135;letter-spacing:-0.194px;">56</span><svg style="left:673px;top:647.1px;" width="20" height="16" viewBox="-9 -8 20 16"><path d="M-5.700 0.100L-1.300 4.700L9 -5" stroke="#258a48" stroke-width="2.200" fill="none" stroke-linejoin="miter"/></svg><div style="left:221px;top:0;width:1563px;height:653px;overflow:hidden"><span class="t" style="left:354.89px;top:89.86px;font-size:15.4px;line-height:22px;color:#3b3113;">6.8</span><span class="t" style="left:381.00px;top:92.83px;font-size:12.6px;line-height:18px;color:#7b7b7e;letter-spacing:0.320px;">м²</span><span class="t" style="left:3.18px;top:120.66px;font-size:15.4px;line-height:22px;color:#313135;">180.5</span><span class="t" style="left:46.40px;top:123.63px;font-size:12.6px;line-height:18px;color:#7b7b7e;letter-spacing:0.336px;">мм</span><span class="t" style="left:134.88px;top:120.66px;font-size:15.4px;line-height:22px;color:#313135;">10</span><span class="t" style="left:156.70px;top:123.63px;font-size:12.6px;line-height:18px;color:#7b7b7e;letter-spacing:0.336px;">мм</span><span class="t" style="left:236.31px;top:120.66px;font-size:15.4px;line-height:22px;color:#313135;">180</span><span class="t" style="left:266.70px;top:123.63px;font-size:12.6px;line-height:18px;color:#7b7b7e;letter-spacing:0.336px;">мм</span><span class="t" style="left:367.74px;top:120.66px;font-size:15.4px;line-height:22px;color:#313135;">0</span><span class="t" style="left:381.00px;top:123.63px;font-size:12.6px;line-height:18px;color:#7b7b7e;letter-spacing:0.320px;">м²</span><span class="t" style="left:16.01px;top:151.46px;font-size:15.4px;line-height:22px;color:#313135;">162</span><span class="t" style="left:46.40px;top:154.43px;font-size:12.6px;line-height:18px;color:#7b7b7e;letter-spacing:0.336px;">мм</span><span class="t" style="left:143.44px;top:151.46px;font-size:15.4px;line-height:22px;color:#313135;">6</span><span class="t" style="left:156.70px;top:154.43px;font-size:12.6px;line-height:18px;color:#7b7b7e;letter-spacing:0.336px;">мм</span><span class="t" style="left:232.03px;top:151.46px;font-size:15.4px;line-height:22px;color:#313135;">42.9</span><span class="t" style="left:266.70px;top:154.43px;font-size:12.6px;line-height:18px;color:#7b7b7e;letter-spacing:0.336px;">мм</span><span class="t" style="left:367.74px;top:151.46px;font-size:15.4px;line-height:22px;color:#313135;">0</span><span class="t" style="left:381.00px;top:154.43px;font-size:12.6px;line-height:18px;color:#7b7b7e;letter-spacing:0.320px;">м²</span><span class="t" style="left:24.57px;top:182.26px;font-size:15.4px;line-height:22px;color:#313135;">70</span><span class="t" style="left:46.40px;top:185.23px;font-size:12.6px;line-height:18px;color:#7b7b7e;letter-spacing:0.336px;">мм</span><span class="t" style="left:143.44px;top:182.26px;font-size:15.4px;line-height:22px;color:#313135;">6</span><span class="t" style="left:156.70px;top:185.23px;font-size:12.6px;line-height:18px;color:#7b7b7e;letter-spacing:0.336px;">мм</span><span class="t" style="left:244.88px;top:182.26px;font-size:15.4px;line-height:22px;color:#313135;">70</span><span class="t" style="left:266.70px;top:185.23px;font-size:12.6px;line-height:18px;color:#7b7b7e;letter-spacing:0.336px;">мм</span><span class="t" style="left:367.74px;top:182.26px;font-size:15.4px;line-height:22px;color:#313135;">0</span><span class="t" style="left:381.00px;top:185.23px;font-size:12.6px;line-height:18px;color:#7b7b7e;letter-spacing:0.320px;">м²</span><span class="t" style="left:16.01px;top:213.06px;font-size:15.4px;line-height:22px;color:#313135;">162</span><span class="t" style="left:46.40px;top:216.03px;font-size:12.6px;line-height:18px;color:#7b7b7e;letter-spacing:0.336px;">мм</span><span class="t" style="left:143.44px;top:213.06px;font-size:15.4px;line-height:22px;color:#313135;">6</span><span class="t" style="left:156.70px;top:216.03px;font-size:12.6px;line-height:18px;color:#7b7b7e;letter-spacing:0.336px;">мм</span><span class="t" style="left:232.03px;top:213.06px;font-size:15.4px;line-height:22px;color:#313135;">42.8</span><span class="t" style="left:266.70px;top:216.03px;font-size:12.6px;line-height:18px;color:#7b7b7e;letter-spacing:0.336px;">мм</span><span class="t" style="left:367.74px;top:213.06px;font-size:15.4px;line-height:22px;color:#313135;">0</span><span class="t" style="left:381.00px;top:216.03px;font-size:12.6px;line-height:18px;color:#7b7b7e;letter-spacing:0.320px;">м²</span><span class="t" style="left:16.01px;top:243.86px;font-size:15.4px;line-height:22px;color:#313135;">162</span><span class="t" style="left:46.40px;top:246.83px;font-size:12.6px;line-height:18px;color:#7b7b7e;letter-spacing:0.336px;">мм</span><span class="t" style="left:143.44px;top:243.86px;font-size:15.4px;line-height:22px;color:#313135;">6</span><span class="t" style="left:156.70px;top:246.83px;font-size:12.6px;line-height:18px;color:#7b7b7e;letter-spacing:0.336px;">мм</span><span class="t" style="left:232.03px;top:243.86px;font-size:15.4px;line-height:22px;color:#313135;">42.9</span><span class="t" style="left:266.70px;top:246.83px;font-size:12.6px;line-height:18px;color:#7b7b7e;letter-spacing:0.336px;">мм</span><span class="t" style="left:367.74px;top:243.86px;font-size:15.4px;line-height:22px;color:#313135;">0</span><span class="t" style="left:381.00px;top:246.83px;font-size:12.6px;line-height:18px;color:#7b7b7e;letter-spacing:0.320px;">м²</span><span class="t" style="left:-5.38px;top:274.66px;font-size:15.4px;line-height:22px;color:#313135;">3970.5</span><span class="t" style="left:46.40px;top:277.63px;font-size:12.6px;line-height:18px;color:#7b7b7e;letter-spacing:0.336px;">мм</span><span class="t" style="left:143.44px;top:274.66px;font-size:15.4px;line-height:22px;color:#313135;">8</span><span class="t" style="left:156.70px;top:277.63px;font-size:12.6px;line-height:18px;color:#7b7b7e;letter-spacing:0.336px;">мм</span><span class="t" style="left:236.31px;top:274.66px;font-size:15.4px;line-height:22px;color:#313135;">200</span><span class="t" style="left:266.70px;top:277.63px;font-size:12.6px;line-height:18px;color:#7b7b7e;letter-spacing:0.336px;">мм</span><span class="t" style="left:354.89px;top:274.66px;font-size:15.4px;line-height:22px;color:#313135;">1.6</span><span class="t" style="left:381.00px;top:277.63px;font-size:12.6px;line-height:18px;color:#7b7b7e;letter-spacing:0.320px;">м²</span><span class="t" style="left:3.18px;top:305.46px;font-size:15.4px;line-height:22px;color:#313135;">139.7</span><span class="t" style="left:46.40px;top:308.43px;font-size:12.6px;line-height:18px;color:#7b7b7e;letter-spacing:0.336px;">мм</span><span class="t" style="left:134.88px;top:305.46px;font-size:15.4px;line-height:22px;color:#313135;">90</span><span class="t" style="left:156.70px;top:308.43px;font-size:12.6px;line-height:18px;color:#7b7b7e;letter-spacing:0.336px;">мм</span><span class="t" style="left:244.88px;top:305.46px;font-size:15.4px;line-height:22px;color:#313135;">90</span><span class="t" style="left:266.70px;top:308.43px;font-size:12.6px;line-height:18px;color:#7b7b7e;letter-spacing:0.336px;">мм</span><span class="t" style="left:354.89px;top:305.46px;font-size:15.4px;line-height:22px;color:#313135;">0.1</span><span class="t" style="left:381.00px;top:308.43px;font-size:12.6px;line-height:18px;color:#7b7b7e;letter-spacing:0.320px;">м²</span><span class="t" style="left:16.01px;top:336.26px;font-size:15.4px;line-height:22px;color:#313135;">140</span><span class="t" style="left:46.40px;top:339.23px;font-size:12.6px;line-height:18px;color:#7b7b7e;letter-spacing:0.336px;">мм</span><span class="t" style="left:143.44px;top:336.26px;font-size:15.4px;line-height:22px;color:#313135;">6</span><span class="t" style="left:156.70px;top:339.23px;font-size:12.6px;line-height:18px;color:#7b7b7e;letter-spacing:0.336px;">мм</span><span class="t" style="left:236.31px;top:336.26px;font-size:15.4px;line-height:22px;color:#313135;">140</span><span class="t" style="left:266.70px;top:339.23px;font-size:12.6px;line-height:18px;color:#7b7b7e;letter-spacing:0.336px;">мм</span><span class="t" style="left:367.74px;top:336.26px;font-size:15.4px;line-height:22px;color:#313135;">0</span><span class="t" style="left:381.00px;top:339.23px;font-size:12.6px;line-height:18px;color:#7b7b7e;letter-spacing:0.320px;">м²</span><span class="t" style="left:24.57px;top:367.06px;font-size:15.4px;line-height:22px;color:#313135;">70</span><span class="t" style="left:46.40px;top:370.03px;font-size:12.6px;line-height:18px;color:#7b7b7e;letter-spacing:0.336px;">мм</span><span class="t" style="left:143.44px;top:367.06px;font-size:15.4px;line-height:22px;color:#313135;">6</span><span class="t" style="left:156.70px;top:370.03px;font-size:12.6px;line-height:18px;color:#7b7b7e;letter-spacing:0.336px;">мм</span><span class="t" style="left:244.88px;top:367.06px;font-size:15.4px;line-height:22px;color:#313135;">70</span><span class="t" style="left:266.70px;top:370.03px;font-size:12.6px;line-height:18px;color:#7b7b7e;letter-spacing:0.336px;">мм</span><span class="t" style="left:367.74px;top:367.06px;font-size:15.4px;line-height:22px;color:#313135;">0</span><span class="t" style="left:381.00px;top:370.03px;font-size:12.6px;line-height:18px;color:#7b7b7e;letter-spacing:0.320px;">м²</span><span class="t" style="left:3.18px;top:397.86px;font-size:15.4px;line-height:22px;color:#313135;">139.7</span><span class="t" style="left:46.40px;top:400.83px;font-size:12.6px;line-height:18px;color:#7b7b7e;letter-spacing:0.336px;">мм</span><span class="t" style="left:134.88px;top:397.86px;font-size:15.4px;line-height:22px;color:#313135;">90</span><span class="t" style="left:156.70px;top:400.83px;font-size:12.6px;line-height:18px;color:#7b7b7e;letter-spacing:0.336px;">мм</span><span class="t" style="left:244.88px;top:397.86px;font-size:15.4px;line-height:22px;color:#313135;">90</span><span class="t" style="left:266.70px;top:400.83px;font-size:12.6px;line-height:18px;color:#7b7b7e;letter-spacing:0.336px;">мм</span><span class="t" style="left:354.89px;top:397.86px;font-size:15.4px;line-height:22px;color:#313135;">0.1</span><span class="t" style="left:381.00px;top:400.83px;font-size:12.6px;line-height:18px;color:#7b7b7e;letter-spacing:0.320px;">м²</span><span class="t" style="left:3.18px;top:428.66px;font-size:15.4px;line-height:22px;color:#313135;">139.7</span><span class="t" style="left:46.40px;top:431.63px;font-size:12.6px;line-height:18px;color:#7b7b7e;letter-spacing:0.336px;">мм</span><span class="t" style="left:134.88px;top:428.66px;font-size:15.4px;line-height:22px;color:#313135;">90</span><span class="t" style="left:156.70px;top:431.63px;font-size:12.6px;line-height:18px;color:#7b7b7e;letter-spacing:0.336px;">мм</span><span class="t" style="left:244.88px;top:428.66px;font-size:15.4px;line-height:22px;color:#313135;">90</span><span class="t" style="left:266.70px;top:431.63px;font-size:12.6px;line-height:18px;color:#7b7b7e;letter-spacing:0.336px;">мм</span><span class="t" style="left:354.89px;top:428.66px;font-size:15.4px;line-height:22px;color:#313135;">0.1</span><span class="t" style="left:381.00px;top:431.63px;font-size:12.6px;line-height:18px;color:#7b7b7e;letter-spacing:0.320px;">м²</span><span class="t" style="left:16.01px;top:459.46px;font-size:15.4px;line-height:22px;color:#313135;">162</span><span class="t" style="left:46.40px;top:462.43px;font-size:12.6px;line-height:18px;color:#7b7b7e;letter-spacing:0.336px;">мм</span><span class="t" style="left:143.44px;top:459.46px;font-size:15.4px;line-height:22px;color:#313135;">6</span><span class="t" style="left:156.70px;top:462.43px;font-size:12.6px;line-height:18px;color:#7b7b7e;letter-spacing:0.336px;">мм</span><span class="t" style="left:232.03px;top:459.46px;font-size:15.4px;line-height:22px;color:#313135;">42.9</span><span class="t" style="left:266.70px;top:462.43px;font-size:12.6px;line-height:18px;color:#7b7b7e;letter-spacing:0.336px;">мм</span><span class="t" style="left:367.74px;top:459.46px;font-size:15.4px;line-height:22px;color:#313135;">0</span><span class="t" style="left:381.00px;top:462.43px;font-size:12.6px;line-height:18px;color:#7b7b7e;letter-spacing:0.320px;">м²</span><span class="t" style="left:3.18px;top:490.26px;font-size:15.4px;line-height:22px;color:#313135;">139.7</span><span class="t" style="left:46.40px;top:493.23px;font-size:12.6px;line-height:18px;color:#7b7b7e;letter-spacing:0.336px;">мм</span><span class="t" style="left:134.88px;top:490.26px;font-size:15.4px;line-height:22px;color:#313135;">90</span><span class="t" style="left:156.70px;top:493.23px;font-size:12.6px;line-height:18px;color:#7b7b7e;letter-spacing:0.336px;">мм</span><span class="t" style="left:244.88px;top:490.26px;font-size:15.4px;line-height:22px;color:#313135;">90</span><span class="t" style="left:266.70px;top:493.23px;font-size:12.6px;line-height:18px;color:#7b7b7e;letter-spacing:0.336px;">мм</span><span class="t" style="left:354.89px;top:490.26px;font-size:15.4px;line-height:22px;color:#313135;">0.1</span><span class="t" style="left:381.00px;top:493.23px;font-size:12.6px;line-height:18px;color:#7b7b7e;letter-spacing:0.320px;">м²</span><span class="t" style="left:-5.38px;top:521.06px;font-size:15.4px;line-height:22px;color:#3b3113;">3995.8</span><span class="t" style="left:46.40px;top:524.03px;font-size:12.6px;line-height:18px;color:#7b7b7e;letter-spacing:0.336px;">мм</span><span class="t" style="left:354.89px;top:521.06px;font-size:15.4px;line-height:22px;color:#3b3113;">6.8</span><span class="t" style="left:381.00px;top:524.03px;font-size:12.6px;line-height:18px;color:#7b7b7e;letter-spacing:0.320px;">м²</span><span class="t" style="left:16.01px;top:551.86px;font-size:15.4px;line-height:22px;color:#313135;">162</span><span class="t" style="left:46.40px;top:554.83px;font-size:12.6px;line-height:18px;color:#7b7b7e;letter-spacing:0.336px;">мм</span><span class="t" style="left:143.44px;top:551.86px;font-size:15.4px;line-height:22px;color:#313135;">6</span><span class="t" style="left:156.70px;top:554.83px;font-size:12.6px;line-height:18px;color:#7b7b7e;letter-spacing:0.336px;">мм</span><span class="t" style="left:232.03px;top:551.86px;font-size:15.4px;line-height:22px;color:#313135;">42.8</span><span class="t" style="left:266.70px;top:554.83px;font-size:12.6px;line-height:18px;color:#7b7b7e;letter-spacing:0.336px;">мм</span><span class="t" style="left:367.74px;top:551.86px;font-size:15.4px;line-height:22px;color:#313135;">0</span><span class="t" style="left:381.00px;top:554.83px;font-size:12.6px;line-height:18px;color:#7b7b7e;letter-spacing:0.320px;">м²</span><span class="t" style="left:16.01px;top:582.66px;font-size:15.4px;line-height:22px;color:#313135;">162</span><span class="t" style="left:46.40px;top:585.63px;font-size:12.6px;line-height:18px;color:#7b7b7e;letter-spacing:0.336px;">мм</span><span class="t" style="left:143.44px;top:582.66px;font-size:15.4px;line-height:22px;color:#313135;">6</span><span class="t" style="left:156.70px;top:585.63px;font-size:12.6px;line-height:18px;color:#7b7b7e;letter-spacing:0.336px;">мм</span><span class="t" style="left:232.03px;top:582.66px;font-size:15.4px;line-height:22px;color:#313135;">42.9</span><span class="t" style="left:266.70px;top:585.63px;font-size:12.6px;line-height:18px;color:#7b7b7e;letter-spacing:0.336px;">мм</span><span class="t" style="left:367.74px;top:582.66px;font-size:15.4px;line-height:22px;color:#313135;">0</span><span class="t" style="left:381.00px;top:585.63px;font-size:12.6px;line-height:18px;color:#7b7b7e;letter-spacing:0.320px;">м²</span><span class="t" style="left:3.18px;top:613.46px;font-size:15.4px;line-height:22px;color:#313135;">139.7</span><span class="t" style="left:46.40px;top:616.43px;font-size:12.6px;line-height:18px;color:#7b7b7e;letter-spacing:0.336px;">мм</span><span class="t" style="left:134.88px;top:613.46px;font-size:15.4px;line-height:22px;color:#313135;">90</span><span class="t" style="left:156.70px;top:616.43px;font-size:12.6px;line-height:18px;color:#7b7b7e;letter-spacing:0.336px;">мм</span><span class="t" style="left:244.88px;top:613.46px;font-size:15.4px;line-height:22px;color:#313135;">90</span><span class="t" style="left:266.70px;top:616.43px;font-size:12.6px;line-height:18px;color:#7b7b7e;letter-spacing:0.336px;">мм</span><span class="t" style="left:354.89px;top:613.46px;font-size:15.4px;line-height:22px;color:#313135;">0.1</span><span class="t" style="left:381.00px;top:616.43px;font-size:12.6px;line-height:18px;color:#7b7b7e;letter-spacing:0.320px;">м²</span><span class="t" style="left:3.18px;top:644.26px;font-size:15.4px;line-height:22px;color:#313135;">139.7</span><span class="t" style="left:46.40px;top:647.23px;font-size:12.6px;line-height:18px;color:#7b7b7e;letter-spacing:0.336px;">мм</span><span class="t" style="left:134.88px;top:644.26px;font-size:15.4px;line-height:22px;color:#313135;">90</span><span class="t" style="left:156.70px;top:647.23px;font-size:12.6px;line-height:18px;color:#7b7b7e;letter-spacing:0.336px;">мм</span><span class="t" style="left:244.88px;top:644.26px;font-size:15.4px;line-height:22px;color:#313135;">90</span><span class="t" style="left:266.70px;top:647.23px;font-size:12.6px;line-height:18px;color:#7b7b7e;letter-spacing:0.336px;">мм</span><span class="t" style="left:354.89px;top:644.26px;font-size:15.4px;line-height:22px;color:#313135;">0.1</span><span class="t" style="left:381.00px;top:647.23px;font-size:12.6px;line-height:18px;color:#7b7b7e;letter-spacing:0.320px;">м²</span></div></div><div style="left:283px;top:240px;width:1px;height:698px;background:#8a898a"></div><div style="left:117px;top:240px;width:1px;height:44.5px;background:#8f8e8f"></div><div class="cb" style="left:80px;top:251px;width:22px;height:22px;"></div><span class="t" style="left:132.00px;top:250.66px;font-size:15.4px;line-height:22px;color:#5e5e61;letter-spacing:-0.408px;">Позиция</span><span class="t" style="left:284.30px;top:250.66px;font-size:15.4px;line-height:22px;color:#5e5e61;letter-spacing:-0.652px;">ина</span><svg style="left:342.6px;top:256.6px;" width="2.2" height="10.8" viewBox="0 0 2.2 10.8"><rect x="0" y="0" width="2.2" height="2.2" rx="0.4" fill="#3f4499"/><rect x="0" y="4.3" width="2.2" height="2.2" rx="0.4" fill="#3f4499"/><rect x="0" y="8.6" width="2.2" height="2.2" rx="0.4" fill="#3f4499"/></svg><div style="left:360px;top:240px;width:1px;height:44.5px;background:#8f8e8f"></div><span class="t" style="left:374.50px;top:250.66px;font-size:15.4px;line-height:22px;color:#5e5e61;letter-spacing:-0.320px;">Ширина</span><svg style="left:453.1px;top:256.6px;" width="2.2" height="10.8" viewBox="0 0 2.2 10.8"><rect x="0" y="0" width="2.2" height="2.2" rx="0.4" fill="#3f4499"/><rect x="0" y="4.3" width="2.2" height="2.2" rx="0.4" fill="#3f4499"/><rect x="0" y="8.6" width="2.2" height="2.2" rx="0.4" fill="#3f4499"/></svg><div style="left:470px;top:240px;width:1px;height:44.5px;background:#8f8e8f"></div><span class="t" style="left:484.50px;top:250.66px;font-size:15.4px;line-height:22px;color:#5e5e61;letter-spacing:-0.393px;">Высота</span><svg style="left:563.1px;top:256.6px;" width="2.2" height="10.8" viewBox="0 0 2.2 10.8"><rect x="0" y="0" width="2.2" height="2.2" rx="0.4" fill="#3f4499"/><rect x="0" y="4.3" width="2.2" height="2.2" rx="0.4" fill="#3f4499"/><rect x="0" y="8.6" width="2.2" height="2.2" rx="0.4" fill="#3f4499"/></svg><div style="left:580px;top:240px;width:1px;height:44.5px;background:#8f8e8f"></div><span class="t" style="left:594.50px;top:250.66px;font-size:15.4px;line-height:22px;color:#5e5e61;letter-spacing:-0.604px;">Площа...</span><svg style="left:673.1px;top:256.6px;" width="2.2" height="10.8" viewBox="0 0 2.2 10.8"><rect x="0" y="0" width="2.2" height="2.2" rx="0.4" fill="#3f4499"/><rect x="0" y="4.3" width="2.2" height="2.2" rx="0.4" fill="#3f4499"/><rect x="0" y="8.6" width="2.2" height="2.2" rx="0.4" fill="#3f4499"/></svg><div style="left:690px;top:240px;width:1px;height:44.5px;background:#8f8e8f"></div><span class="t" style="left:704.50px;top:250.66px;font-size:15.4px;line-height:22px;color:#5e5e61;letter-spacing:-0.353px;">Есть от...</span><svg style="left:783.1px;top:256.6px;" width="2.2" height="10.8" viewBox="0 0 2.2 10.8"><rect x="0" y="0" width="2.2" height="2.2" rx="0.4" fill="#3f4499"/><rect x="0" y="4.3" width="2.2" height="2.2" rx="0.4" fill="#3f4499"/><rect x="0" y="8.6" width="2.2" height="2.2" rx="0.4" fill="#3f4499"/></svg><div style="left:800px;top:240px;width:1px;height:44.5px;background:#8f8e8f"></div><span class="t" style="left:814.50px;top:250.66px;font-size:15.4px;line-height:22px;color:#5e5e61;letter-spacing:-0.347px;">Катет с...</span><svg style="left:893.1px;top:256.6px;" width="2.2" height="10.8" viewBox="0 0 2.2 10.8"><rect x="0" y="0" width="2.2" height="2.2" rx="0.4" fill="#3f4499"/><rect x="0" y="4.3" width="2.2" height="2.2" rx="0.4" fill="#3f4499"/><rect x="0" y="8.6" width="2.2" height="2.2" rx="0.4" fill="#3f4499"/></svg><div style="left:910px;top:240px;width:1px;height:44.5px;background:#8f8e8f"></div><span class="t" style="left:924.50px;top:250.66px;font-size:15.4px;line-height:22px;color:#5e5e61;letter-spacing:-0.533px;">Тип шв...</span><svg style="left:1003.1px;top:256.6px;" width="2.2" height="10.8" viewBox="0 0 2.2 10.8"><rect x="0" y="0" width="2.2" height="2.2" rx="0.4" fill="#3f4499"/><rect x="0" y="4.3" width="2.2" height="2.2" rx="0.4" fill="#3f4499"/><rect x="0" y="8.6" width="2.2" height="2.2" rx="0.4" fill="#3f4499"/></svg><div style="left:1020px;top:240px;width:1px;height:44.5px;background:#8f8e8f"></div><span class="t" style="left:1034.50px;top:250.66px;font-size:15.4px;line-height:22px;color:#5e5e61;letter-spacing:-0.547px;">Станда...</span><svg style="left:1113.1px;top:256.6px;" width="2.2" height="10.8" viewBox="0 0 2.2 10.8"><rect x="0" y="0" width="2.2" height="2.2" rx="0.4" fill="#3f4499"/><rect x="0" y="4.3" width="2.2" height="2.2" rx="0.4" fill="#3f4499"/><rect x="0" y="8.6" width="2.2" height="2.2" rx="0.4" fill="#3f4499"/></svg><div style="left:1130px;top:240px;width:1px;height:44.5px;background:#8f8e8f"></div><span class="t" style="left:1144.50px;top:250.66px;font-size:15.4px;line-height:22px;color:#5e5e61;letter-spacing:-0.385px;">Комме...</span><svg style="left:1223.1px;top:256.6px;" width="2.2" height="10.8" viewBox="0 0 2.2 10.8"><rect x="0" y="0" width="2.2" height="2.2" rx="0.4" fill="#3f4499"/><rect x="0" y="4.3" width="2.2" height="2.2" rx="0.4" fill="#3f4499"/><rect x="0" y="8.6" width="2.2" height="2.2" rx="0.4" fill="#3f4499"/></svg><div style="left:1240px;top:240px;width:1px;height:44.5px;background:#8f8e8f"></div><span class="t" style="left:1254.50px;top:250.66px;font-size:15.4px;line-height:22px;color:#5e5e61;letter-spacing:-1.512px;">DSTV</span><svg style="left:1333.1px;top:256.6px;" width="2.2" height="10.8" viewBox="0 0 2.2 10.8"><rect x="0" y="0" width="2.2" height="2.2" rx="0.4" fill="#3f4499"/><rect x="0" y="4.3" width="2.2" height="2.2" rx="0.4" fill="#3f4499"/><rect x="0" y="8.6" width="2.2" height="2.2" rx="0.4" fill="#3f4499"/></svg><div style="left:1350px;top:240px;width:1px;height:44.5px;background:#8f8e8f"></div><span class="t" style="left:1364.50px;top:250.66px;font-size:15.4px;line-height:22px;color:#5e5e61;letter-spacing:-0.100px;">Чертежи</span><svg style="left:1443.1px;top:256.6px;" width="2.2" height="10.8" viewBox="0 0 2.2 10.8"><rect x="0" y="0" width="2.2" height="2.2" rx="0.4" fill="#3f4499"/><rect x="0" y="4.3" width="2.2" height="2.2" rx="0.4" fill="#3f4499"/><rect x="0" y="8.6" width="2.2" height="2.2" rx="0.4" fill="#3f4499"/></svg><div style="left:1460px;top:240px;width:1px;height:44.5px;background:#8f8e8f"></div><span class="t" style="left:1474.50px;top:250.66px;font-size:15.4px;line-height:22px;color:#5e5e61;letter-spacing:-0.327px;">Количество болтов</span><svg style="left:1651.9px;top:256.6px;" width="2.2" height="10.8" viewBox="0 0 2.2 10.8"><rect x="0" y="0" width="2.2" height="2.2" rx="0.4" fill="#3f4499"/><rect x="0" y="4.3" width="2.2" height="2.2" rx="0.4" fill="#3f4499"/><rect x="0" y="8.6" width="2.2" height="2.2" rx="0.4" fill="#3f4499"/></svg><div style="left:1669px;top:240px;width:1px;height:44.5px;background:#8f8e8f"></div><span class="t" style="left:1683.50px;top:250.66px;font-size:15.4px;line-height:22px;color:#5e5e61;letter-spacing:-0.138px;">Количество гаек</span><svg style="left:1838.1px;top:256.6px;" width="2.2" height="10.8" viewBox="0 0 2.2 10.8"><rect x="0" y="0" width="2.2" height="2.2" rx="0.4" fill="#3f4499"/><rect x="0" y="4.3" width="2.2" height="2.2" rx="0.4" fill="#3f4499"/><rect x="0" y="8.6" width="2.2" height="2.2" rx="0.4" fill="#3f4499"/></svg><div style="left:1848px;top:240px;width:4px;height:698px;background:#929193"></div><div style="left:1850px;top:257px;width:2px;height:17px;background:#6f6e71"></div></section>
<footer style="left:63px;top:937.3px;width:1789px;height:53.7px"><div style="left:0px;top:0px;width:1789px;height:17.5px;background:#949395"></div><div style="left:619px;top:2px;width:933px;height:13.5px;background:#767578"></div><svg style="left:4.5px;top:4.5px;" width="6" height="8" viewBox="0 0 6 8"><path d="M5.5 0.3v7.4L0.5 4z" fill="#2a2a2c"/></svg><div style="left:0px;top:17.5px;width:1789px;height:1px;background:#939293"></div><span class="t" style="left:18.30px;top:30.65px;font-size:14.3px;line-height:20px;color:#4e4e51;">Всего</span><span class="t" style="left:59.60px;top:30.65px;font-size:14.3px;line-height:20px;color:#2c2c2f;letter-spacing:0.547px;-webkit-text-stroke:0.12px #2c2c2f;">2628</span><span class="t" style="left:97.30px;top:32.23px;font-size:12.6px;line-height:18px;color:#6c6c6f;letter-spacing:0.061px;">элементов</span><span class="t" style="left:1148.50px;top:30.65px;font-size:14.3px;line-height:20px;color:#828285;letter-spacing:0.125px;">Статистика марок</span><span class="t" style="left:1278.60px;top:33.33px;font-size:10.6px;line-height:15px;color:#828285;">—</span><span class="t" style="left:1298.50px;top:30.65px;font-size:14.3px;line-height:20px;color:#5a5a5d;letter-spacing:0.172px;">Количество</span><span class="t" style="left:1384.50px;top:30.65px;font-size:14.3px;line-height:20px;color:#464649;letter-spacing:0.380px;-webkit-text-stroke:0.1px #464649;">416</span><span class="t" style="left:1415.00px;top:30.65px;font-size:14.3px;line-height:20px;color:#77777a;letter-spacing:-0.916px;">шт</span><span class="t" style="left:1441.50px;top:30.65px;font-size:14.3px;line-height:20px;color:#77777a;letter-spacing:-1.766px;">·</span><span class="t" style="left:1453.00px;top:30.65px;font-size:14.3px;line-height:20px;color:#5a5a5d;letter-spacing:-0.156px;">Масса</span><span class="t" style="left:1501.50px;top:30.65px;font-size:14.3px;line-height:20px;color:#464649;letter-spacing:0.547px;-webkit-text-stroke:0.1px #464649;">58494</span><span class="t" style="left:1549.00px;top:30.65px;font-size:14.3px;line-height:20px;color:#77777a;letter-spacing:0.558px;">кг</span><span class="t" style="left:1571.50px;top:30.65px;font-size:14.3px;line-height:20px;color:#77777a;letter-spacing:-1.766px;">·</span><span class="t" style="left:1583.50px;top:30.65px;font-size:14.3px;line-height:20px;color:#5a5a5d;letter-spacing:0.190px;">Площадь покраски</span><span class="t" style="left:1719.50px;top:30.65px;font-size:14.3px;line-height:20px;color:#464649;letter-spacing:0.461px;-webkit-text-stroke:0.1px #464649;">1861.2</span><span class="t" style="left:1771.00px;top:30.65px;font-size:14.3px;line-height:20px;color:#77777a;letter-spacing:-0.397px;">м²</span></footer>
<div role="dialog" style="left:311px;top:334px;width:880px;height:356px;background:#fff;border-radius:5.5px;box-shadow:0 0 0 1px rgba(0,0,0,.04),0 1px 3px rgba(0,0,0,.14)"><h2 class="t" style="left:27.00px;top:25.55px;font-size:24.4px;line-height:34px;color:#444b5a;font-family:'DejaVu Serif','Liberation Serif',serif;letter-spacing:-0.384px;">Импортировать в заказ</h2><svg style="left:822px;top:30px;" width="28" height="28" viewBox="822 30 28 28"><path d="M829.9 37.900l12.400 12.200M842.300 37.900L829.900 50.100" stroke="#4a505c" stroke-width="2" fill="none" stroke-linecap="round"/></svg><div style="left:0px;top:129.8px;width:880px;height:1.8px;background:#dfe1e5"></div><div style="left:0px;top:129.6px;width:76px;height:2.2px;background:#5f6fe4"></div><a class="t" style="left:27.00px;top:99.14px;font-size:14.6px;line-height:20px;color:#5f63d6;letter-spacing:-0.372px;">IFC</a><a class="t" style="left:102.50px;top:99.14px;font-size:14.6px;line-height:20px;color:#6b7280;letter-spacing:-1.030px;">DSTV</a><a class="t" style="left:190.70px;top:99.14px;font-size:14.6px;line-height:20px;color:#6b7280;letter-spacing:0.211px;">Чертежи марок</a><a class="t" style="left:349.70px;top:99.14px;font-size:14.6px;line-height:20px;color:#6b7280;letter-spacing:0.123px;">Чертежи деталей</a><p class="t" style="left:27.00px;top:155.16px;font-size:15.4px;line-height:22px;color:#4f5765;letter-spacing:0.064px;">IFC-файл — главный источник данных ведомости отправочных марок.</p><div style="left:27px;top:219.8px;width:348px;height:1px;background:#e1e3e7"></div><div style="left:506.5px;top:219.8px;width:347.5px;height:1px;background:#e1e3e7"></div><a class="t" style="left:402.50px;top:210.24px;font-size:14.6px;line-height:20px;color:#6468dc;letter-spacing:-0.021px;">Подробнее</a><a class="t" style="left:45.60px;top:289.34px;font-size:14.6px;line-height:20px;color:#6468dc;letter-spacing:0.046px;-webkit-text-stroke:0.2px #6468dc;">Чек-лист для экспорта IFC4</a><button style="left:272.2px;top:277.2px;width:581.5px;height:43.7px;background:#5f77f3;border-radius:5.5px"></button><svg style="left:478px;top:288px;" width="24" height="24" viewBox="478 288 24 24"><path d="M490 302.500V291.200M485.600 295.300L490 290.900l4.400 4.400M481.600 302.600v2.700a2.100 2.100 0 0 0 2.100 2.100h12.600a2.100 2.100 0 0 0 2.100-2.100v-2.700" stroke="#fff" stroke-width="1.700" fill="none" stroke-linecap="round" stroke-linejoin="round"/></svg><span class="t" style="left:508.00px;top:289.35px;font-size:14.3px;line-height:20px;color:#fff;letter-spacing:0.161px;-webkit-text-stroke:0.45px #fff;">Загрузить IFC-файл</span></div>
</div></body></html>
